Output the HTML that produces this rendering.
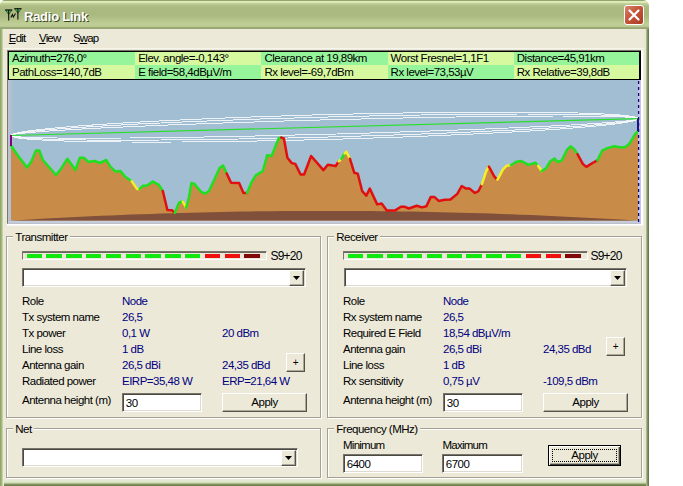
<!DOCTYPE html>
<html><head><meta charset="utf-8"><title>Radio Link</title>
<style>
html,body{margin:0;padding:0;background:#fff;overflow:hidden}
body{width:683px;height:486px;position:relative;font-family:"Liberation Sans",sans-serif;font-size:11.5px;letter-spacing:-0.5px;color:#000}
#win{position:absolute;left:0;top:0;width:649px;height:486px;background:#ece9d8;border-radius:5px 6px 0 0;overflow:hidden}
#tb{position:absolute;left:0;top:0;width:649px;height:29px;background:linear-gradient(#8f9f6c 0,#96a673 0.7px,#e0efb8 1.1px,#dcebb2 2.4px,#c0cf98 3.6px,#aebd85 6px,#a9b97f 9px,#a9b97f 15px,#b4c48b 20px,#bfce96 24px,#bdcc94 26.3px,#a4b47c 27.3px,#8d9d69 27.9px,#8d9d69 28.4px,#d0d4ba 29px)}
#bl,#br,#bb{position:absolute}
#bl{left:0;top:29px;width:4px;height:457px;background:linear-gradient(90deg,#86a05a 0,#9cb274 1px,#acbe8a 2px,#c8d2aa 2.6px,#e8ead6 3.2px,#eeeddc 4px)}
#br{left:643px;top:29px;width:4px;height:452px;background:linear-gradient(90deg,#ece9d8 0,#e6e9d4 1px,#e2e6ce 3px,#c4cfa8 4px)}
#brd{position:absolute;left:646px;top:29px;width:3px;height:457px;background:linear-gradient(90deg,#c4cfa8 0,#a0b080 0.7px,#7e8e62 1.6px,#5e6e46 3px)}
#bb{left:0;top:479px;width:649px;height:7px;background:linear-gradient(#ece9d8 0,#e8ecd6 1px,#dce5c6 3.3px,#bccaa0 4.3px,#82945f 5.1px,#6a7d4c 7px)}
#ttl{position:absolute;left:24px;top:8px;font-weight:bold;font-size:13px;letter-spacing:-0.25px;color:#fff;text-shadow:1px 1px 0 #3c4a22;line-height:18px}
#cls{position:absolute;left:623.5px;top:5px;width:18px;height:18px;border:1px solid #fff;border-radius:3px;background:linear-gradient(135deg,#d8846a,#c4553a 45%,#a83c22)}
.mn{position:absolute;top:32px;line-height:13px;letter-spacing:-0.85px}
.mn u{text-decoration:underline}
#info{position:absolute;left:8px;top:51px;width:631px;height:26.5px;border:1px solid #000;background:#000;overflow:hidden}
.c{position:absolute;height:13px;line-height:13px;padding-left:3px;box-sizing:border-box;white-space:nowrap;overflow:hidden}
#plot{position:absolute;left:0;top:0}
.gb{position:absolute;border:1px solid #a5a094;box-shadow:1px 1px 0 #fff, inset 1px 1px 0 #fff;box-sizing:border-box}
.gl{position:absolute;background:#ece9d8;padding:0 2px;line-height:13px;white-space:nowrap}
.t{position:absolute;line-height:13px;white-space:nowrap}
.v{color:#000080}
.sm{position:absolute;top:251px;width:245px;height:9px;border-top:1px solid #77756a;border-left:1px solid #77756a;box-shadow:inset 0 1px 0 #6a685e;border-bottom:1px solid #fff;border-right:1px solid #fff;box-sizing:border-box;background:#ece9d8}
.sm i{position:absolute;top:2px;height:4px;width:15.5px}
.in{position:absolute;background:#fff;border:1px solid;border-color:#77756a #fff #fff #77756a;box-shadow:inset 1px 1px 0 #4a4840, inset -1px -1px 0 #dedad0;box-sizing:border-box;line-height:14px;padding:1.5px 0 0 2.8px;font-size:11.5px}
.btn{position:absolute;background:#ece9d8;border:1px solid;border-color:#fff #55534a #55534a #fff;box-shadow:inset -1px -1px 0 #aca899;box-sizing:border-box;text-align:center;white-space:nowrap}
.dd{position:absolute;width:15px;height:16px;background:#ece9d8;border:1px solid;border-color:#fff #55534a #55534a #fff;box-shadow:inset -1px -1px 0 #aca899;box-sizing:border-box}
.dd:after{content:"";position:absolute;left:3px;top:5px;width:7px;height:4px;background:#000;clip-path:polygon(0 0,100% 0,50% 100%)}
</style></head><body>
<div id="win">
<div id="tb"></div>
<svg id="ico" width="26" height="26" viewBox="0 0 26 26" style="position:absolute;left:0;top:0"><path d="M5.4 10h6.6L8.7 14.4zM14.6 8.7h6.6L17.9 13.1z" fill="#52cc62" stroke="#0c100c" stroke-width="0.6" stroke-linejoin="round"/><path d="M5.2 10h7M14.4 8.7h7" stroke="#0c100c" stroke-width="0.9"/><path d="M8.7 10V20.6M17.9 8.7V19.4" stroke="#0c100c" stroke-width="1.1" fill="none"/><path d="M10.9 17.4l1.5-2.8 0.9 2.4 2.2-3.6" stroke="#0c100c" stroke-width="1.05" fill="none"/></svg>
<div id="ttl">Radio Link</div>
<div id="cls"><svg width="18" height="18" viewBox="0 0 18 18"><path d="M4.5 4.5l9 9M13.5 4.5l-9 9" stroke="#fff" stroke-width="2.2" stroke-linecap="round"/></svg></div>
<div id="br"></div><div id="bb"></div><div id="bl"></div><div id="brd"></div>
<span class="mn" style="left:8.8px"><u>E</u>dit</span><span class="mn" style="left:39px"><u>V</u>iew</span><span class="mn" style="left:73px">S<u>w</u>ap</span>

<div style="position:absolute;left:4px;top:48px;width:640px;height:1px;background:#f7f6ee"></div><div id="info" style="z-index:2"><div class="c" style="left:0.0px;top:0;width:126.7px;background:#96f49a">Azimuth=276,0°</div><div class="c" style="left:0.0px;top:13px;height:13.5px;line-height:14px;width:126.7px;background:#d6f9a0">PathLoss=140,7dB</div><div class="c" style="left:126.2px;top:0;width:126.7px;background:#d6f9a0">Elev. angle=-0,143°</div><div class="c" style="left:126.2px;top:13px;height:13.5px;line-height:14px;width:126.7px;background:#96f49a">E field=58,4dBµV/m</div><div class="c" style="left:252.4px;top:0;width:126.7px;background:#96f49a">Clearance at 19,89km</div><div class="c" style="left:252.4px;top:13px;height:13.5px;line-height:14px;width:126.7px;background:#d6f9a0">Rx level=-69,7dBm</div><div class="c" style="left:378.6px;top:0;width:126.7px;background:#d6f9a0">Worst Fresnel=1,1F1</div><div class="c" style="left:378.6px;top:13px;height:13.5px;line-height:14px;width:126.7px;background:#96f49a">Rx level=73,53µV</div><div class="c" style="left:504.8px;top:0;width:125.5px;background:#96f49a">Distance=45,91km</div><div class="c" style="left:504.8px;top:13px;height:13.5px;line-height:14px;width:125.5px;background:#d6f9a0">Rx Relative=39,8dB</div></div>

<svg id="plot" width="649" height="230" viewBox="0 0 649 230"><defs><clipPath id="cp"><rect x="8" y="79" width="633" height="144.8"/></clipPath><linearGradient id="lg" x1="0" x2="1" y1="0" y2="0"><stop offset="0" stop-color="#bcc4d4"/><stop offset="1" stop-color="#a2bed2"/></linearGradient></defs><rect x="7" y="50" width="636.3" height="175.6" fill="#fff"/><rect x="7" y="50" width="634" height="173.8" fill="#7a786a"/><rect x="8" y="51" width="633" height="172.8" fill="#c6ccda"/><g clip-path="url(#cp)"><rect x="8" y="79" width="633" height="142" fill="#a2bed2"/><rect x="8" y="79" width="6" height="142" fill="url(#lg)"/>
<polygon points="11,135.5 11.2,135.2 12,134.9 13.2,134.6 14.9,134.3 17,133.9 19.7,133.6 22.8,133.2 26.3,132.9 30.4,132.5 34.9,132.1 39.8,131.7 45.2,131.3 51,130.9 57.2,130.5 63.8,130.1 70.9,129.7 78.3,129.2 86.1,128.8 94.3,128.4 102.8,127.9 111.7,127.5 120.9,127.1 130.4,126.6 140.2,126.2 150.3,125.8 160.7,125.3 171.3,124.9 182.2,124.5 193.3,124.1 204.5,123.7 216,123.3 227.6,122.8 239.4,122.5 251.3,122.1 263.3,121.7 275.5,121.3 287.7,120.9 299.9,120.6 312.2,120.2 324.5,119.9 336.8,119.6 349.1,119.3 361.3,119 373.5,118.7 385.7,118.4 397.7,118.1 409.6,117.9 421.4,117.7 433,117.4 444.5,117.2 455.7,117 466.8,116.9 477.7,116.7 488.3,116.6 498.7,116.4 508.8,116.3 518.6,116.2 528.1,116.2 537.3,116.1 546.2,116.1 554.7,116 562.9,116 570.7,116 578.1,116.1 585.2,116.1 591.8,116.2 598,116.3 603.8,116.3 609.2,116.5 614.1,116.6 618.6,116.7 622.7,116.9 626.2,117.1 629.3,117.3 632,117.5 634.1,117.7 635.8,117.9 637,118.2 637.8,118.4 638,118.7 638,118.7 637.8,119 637,119.3 635.8,119.6 634.1,119.9 632,120.3 629.3,120.6 626.2,121 622.7,121.3 618.6,121.7 614.1,122.1 609.2,122.5 603.8,122.9 598,123.3 591.8,123.7 585.2,124.1 578.1,124.5 570.7,125 562.9,125.4 554.7,125.8 546.2,126.3 537.3,126.7 528.1,127.1 518.6,127.6 508.8,128 498.7,128.4 488.3,128.9 477.7,129.3 466.8,129.7 455.7,130.1 444.5,130.5 433,130.9 421.4,131.4 409.6,131.7 397.7,132.1 385.7,132.5 373.5,132.9 361.3,133.3 349.1,133.6 336.8,134 324.5,134.3 312.2,134.6 299.9,134.9 287.7,135.2 275.5,135.5 263.3,135.8 251.3,136.1 239.4,136.3 227.6,136.5 216,136.8 204.5,137 193.3,137.2 182.2,137.3 171.3,137.5 160.7,137.6 150.3,137.8 140.2,137.9 130.4,138 120.9,138 111.7,138.1 102.8,138.1 94.3,138.2 86.1,138.2 78.3,138.2 70.9,138.1 63.8,138.1 57.2,138 51,137.9 45.2,137.9 39.8,137.7 34.9,137.6 30.4,137.5 26.3,137.3 22.8,137.1 19.7,136.9 17,136.7 14.9,136.5 13.2,136.3 12,136 11.2,135.8 11,135.5" fill="none" stroke="#ffffff" stroke-width="1" stroke-opacity="0.8" shape-rendering="crispEdges"/>
<polygon points="11,135.5 11.2,135.1 12,134.7 13.2,134.3 14.9,133.8 17,133.4 19.7,132.9 22.8,132.5 26.3,132 30.4,131.5 34.9,131 39.8,130.5 45.2,130 51,129.5 57.2,129 63.8,128.5 70.9,128 78.3,127.5 86.1,127 94.3,126.5 102.8,126 111.7,125.5 120.9,125 130.4,124.4 140.2,123.9 150.3,123.5 160.7,123 171.3,122.5 182.2,122 193.3,121.5 204.5,121.1 216,120.6 227.6,120.2 239.4,119.8 251.3,119.3 263.3,118.9 275.5,118.5 287.7,118.2 299.9,117.8 312.2,117.4 324.5,117.1 336.8,116.8 349.1,116.5 361.3,116.2 373.5,115.9 385.7,115.7 397.7,115.4 409.6,115.2 421.4,115 433,114.8 444.5,114.6 455.7,114.5 466.8,114.4 477.7,114.3 488.3,114.2 498.7,114.1 508.8,114.1 518.6,114 528.1,114 537.3,114.1 546.2,114.1 554.7,114.1 562.9,114.2 570.7,114.3 578.1,114.4 585.2,114.6 591.8,114.7 598,114.9 603.8,115.1 609.2,115.3 614.1,115.5 618.6,115.8 622.7,116 626.2,116.3 629.3,116.6 632,116.9 634.1,117.2 635.8,117.6 637,117.9 637.8,118.3 638,118.7 638,118.7 637.8,119.1 637,119.5 635.8,119.9 634.1,120.4 632,120.8 629.3,121.3 626.2,121.7 622.7,122.2 618.6,122.7 614.1,123.2 609.2,123.7 603.8,124.2 598,124.7 591.8,125.2 585.2,125.7 578.1,126.2 570.7,126.7 562.9,127.2 554.7,127.7 546.2,128.2 537.3,128.7 528.1,129.2 518.6,129.8 508.8,130.3 498.7,130.7 488.3,131.2 477.7,131.7 466.8,132.2 455.7,132.7 444.5,133.1 433,133.6 421.4,134 409.6,134.4 397.7,134.9 385.7,135.3 373.5,135.7 361.3,136 349.1,136.4 336.8,136.8 324.5,137.1 312.2,137.4 299.9,137.7 287.7,138 275.5,138.3 263.3,138.5 251.3,138.8 239.4,139 227.6,139.2 216,139.4 204.5,139.6 193.3,139.7 182.2,139.8 171.3,139.9 160.7,140 150.3,140.1 140.2,140.1 130.4,140.2 120.9,140.2 111.7,140.1 102.8,140.1 94.3,140.1 86.1,140 78.3,139.9 70.9,139.8 63.8,139.6 57.2,139.5 51,139.3 45.2,139.1 39.8,138.9 34.9,138.7 30.4,138.4 26.3,138.2 22.8,137.9 19.7,137.6 17,137.3 14.9,137 13.2,136.6 12,136.3 11.2,135.9 11,135.5" fill="none" stroke="#ffffff" stroke-width="1" stroke-opacity="0.8" shape-rendering="crispEdges"/>
<polygon points="11,135.5 11.2,135 12,134.5 13.2,134 14.9,133.5 17,132.9 19.7,132.4 22.8,131.8 26.3,131.3 30.4,130.7 34.9,130.1 39.8,129.5 45.2,129 51,128.4 57.2,127.8 63.8,127.2 70.9,126.6 78.3,126 86.1,125.4 94.3,124.9 102.8,124.3 111.7,123.7 120.9,123.1 130.4,122.6 140.2,122 150.3,121.5 160.7,120.9 171.3,120.4 182.2,119.9 193.3,119.4 204.5,118.9 216,118.4 227.6,117.9 239.4,117.4 251.3,117 263.3,116.6 275.5,116.2 287.7,115.8 299.9,115.4 312.2,115 324.5,114.7 336.8,114.4 349.1,114.1 361.3,113.8 373.5,113.5 385.7,113.3 397.7,113.1 409.6,112.9 421.4,112.7 433,112.6 444.5,112.4 455.7,112.3 466.8,112.2 477.7,112.2 488.3,112.1 498.7,112.1 508.8,112.1 518.6,112.2 528.1,112.2 537.3,112.3 546.2,112.4 554.7,112.5 562.9,112.7 570.7,112.8 578.1,113 585.2,113.2 591.8,113.5 598,113.7 603.8,114 609.2,114.3 614.1,114.6 618.6,114.9 622.7,115.3 626.2,115.6 629.3,116 632,116.4 634.1,116.9 635.8,117.3 637,117.8 637.8,118.2 638,118.7 638,118.7 637.8,119.2 637,119.7 635.8,120.2 634.1,120.7 632,121.3 629.3,121.8 626.2,122.4 622.7,122.9 618.6,123.5 614.1,124.1 609.2,124.7 603.8,125.2 598,125.8 591.8,126.4 585.2,127 578.1,127.6 570.7,128.2 562.9,128.8 554.7,129.3 546.2,129.9 537.3,130.5 528.1,131.1 518.6,131.6 508.8,132.2 498.7,132.7 488.3,133.3 477.7,133.8 466.8,134.3 455.7,134.8 444.5,135.3 433,135.8 421.4,136.3 409.6,136.8 397.7,137.2 385.7,137.6 373.5,138 361.3,138.4 349.1,138.8 336.8,139.2 324.5,139.5 312.2,139.8 299.9,140.1 287.7,140.4 275.5,140.7 263.3,140.9 251.3,141.1 239.4,141.3 227.6,141.5 216,141.6 204.5,141.8 193.3,141.9 182.2,142 171.3,142 160.7,142.1 150.3,142.1 140.2,142.1 130.4,142 120.9,142 111.7,141.9 102.8,141.8 94.3,141.7 86.1,141.5 78.3,141.4 70.9,141.2 63.8,141 57.2,140.7 51,140.5 45.2,140.2 39.8,139.9 34.9,139.6 30.4,139.3 26.3,138.9 22.8,138.6 19.7,138.2 17,137.8 14.9,137.3 13.2,136.9 12,136.4 11.2,136 11,135.5" fill="none" stroke="#ffffff" stroke-width="1" stroke-opacity="0.8" shape-rendering="crispEdges"/>
<line x1="11" y1="135.5" x2="638" y2="118.7" stroke="#28e028" stroke-width="1.2"/>
<polygon points="11,145.5 18.2,156 27,167.5 31.4,161.4 35.8,150.6 39.4,150.6 42.9,160 49,167 56,175 61.4,168.2 67.4,158.7 75.4,170 79.7,157.8 84,157.8 88.4,162 94.6,161 99.9,163 106.2,160 110.4,166.6 115.5,171.6 120.2,170.9 125.5,177 131.7,181.3 137,188.9 139.6,188.9 143.1,185.7 146.6,185.7 152.8,181.6 158.9,184.8 162.8,191 167.4,210 172.1,210.3 174.8,212.9 179.1,202.4 182.7,201.5 186.2,207.7 188.8,198 191.4,183 194.1,183.6 201.1,191.8 205.5,193.6 209,191 215.2,177.8 219.6,168.1 223.1,165.5 226.7,173.5 231.1,182.8 239.1,182.9 243.5,192.9 247,192.9 251.4,182.4 255.8,175.4 262.8,171 267.2,155.1 271.6,156 278.6,138.5 281.2,137.6 283.9,138.5 287.4,157.8 291.8,163.1 295.3,163.9 300.6,174.5 304.1,174.5 311.1,156 323.4,170.1 327.8,164.8 335.7,166 338.7,161.4 341.4,158.9 344.7,153.5 346.4,151.7 349.9,158.7 354.3,172.8 357.8,173.7 362.2,191.2 366.3,195.6 369.8,188.6 377.2,204.4 381.6,203.5 386.8,210.6 394.8,210.6 400.9,206.7 404.4,206.7 408.8,208.5 416.7,205.7 422,207.4 426.4,206.2 430.8,196.9 434.3,196.9 438.7,200.9 444.8,199.7 450.5,199.5 457.3,193.9 461.7,186 466.1,188.6 469.6,188.6 474.9,193 478.4,191.2 481.9,184.2 486.3,171 488.9,166.6 494.2,176.3 497.4,179.8 503,169.3 506.5,165.8 510.9,165.2 516.2,161.7 521.4,161 528.5,164.9 535.5,162.8 538.1,165.8 541.7,171 546,168.4 550.3,161.2 554.5,158.6 557.6,162.1 561.8,160.4 567,149.8 570.5,146.3 574,148.9 577.5,154.2 582.8,163.9 586.3,166.9 592.5,163 597.4,160.4 602.1,150.7 607.4,148.1 614.4,146.3 619.7,147.2 625,147.2 629.4,143.7 634.7,134.9 638,131 638,220.6 11,220.6" fill="#c88c48"/>
<polygon points="11,220.6 21,220 31,219.4 41,218.8 51,218.3 61,217.8 71,217.2 81,216.8 91,216.3 101,215.8 111,215.4 121,215 131,214.6 141,214.2 151,213.9 161,213.5 171,213.2 181,212.9 191,212.7 201,212.4 211,212.2 221,212 231,211.8 241,211.6 251,211.4 261,211.3 271,211.2 281,211.1 291,211 301,211 311,210.9 321,210.9 331,210.9 341,210.9 351,211 361,211 371,211.1 381,211.2 391,211.3 401,211.5 411,211.6 421,211.8 431,212 441,212.2 451,212.5 461,212.7 471,213 481,213.3 491,213.6 501,214 511,214.3 521,214.7 531,215.1 541,215.5 551,216 561,216.4 571,216.9 581,217.4 591,217.9 601,218.4 611,219 621,219.6 631,220.2 638,220.6 638,220.6 11,220.6" fill="#80503a"/>
<polyline points="11,145.5 18.2,156 27,167.5 31.4,161.4 35.8,150.6 39.4,150.6 42.9,160 49,167 56,175 61.4,168.2 67.4,158.7 75.4,170 79.7,157.8 84,157.8 88.4,162 94.6,161 99.9,163 106.2,160 110.4,166.6 115.5,171.6 120.2,170.9 125.5,177 131.7,181.3" fill="none" stroke="#1fe01f" stroke-width="2.5" stroke-linejoin="round" stroke-linecap="round"/>
<polyline points="131.7,181.3 137,188.9 139.6,188.9" fill="none" stroke="#f4ee28" stroke-width="2.5" stroke-linejoin="round" stroke-linecap="round"/>
<polyline points="139.6,188.9 143.1,185.7 146.6,185.7 152.8,181.6 158.9,184.8 162.8,191" fill="none" stroke="#1fe01f" stroke-width="2.5" stroke-linejoin="round" stroke-linecap="round"/>
<polyline points="162.8,191 167.4,210 172.1,210.3 174.8,212.9" fill="none" stroke="#e01010" stroke-width="2.5" stroke-linejoin="round" stroke-linecap="round"/>
<polyline points="174.8,212.9 179.1,202.4 182.7,201.5" fill="none" stroke="#1fe01f" stroke-width="2.5" stroke-linejoin="round" stroke-linecap="round"/>
<polyline points="182.7,201.5 186.2,207.7" fill="none" stroke="#f4ee28" stroke-width="2.5" stroke-linejoin="round" stroke-linecap="round"/>
<polyline points="186.2,207.7 188.8,198 191.4,183 194.1,183.6 201.1,191.8 205.5,193.6 209,191 215.2,177.8 219.6,168.1 223.1,165.5 226.7,173.5" fill="none" stroke="#1fe01f" stroke-width="2.5" stroke-linejoin="round" stroke-linecap="round"/>
<polyline points="226.7,173.5 231.1,182.8 239.1,182.9 243.5,192.9 247,192.9" fill="none" stroke="#e01010" stroke-width="2.5" stroke-linejoin="round" stroke-linecap="round"/>
<polyline points="247,192.9 251.4,182.4 255.8,175.4 262.8,171 267.2,155.1 271.6,156 278.6,138.5 281.2,137.6" fill="none" stroke="#1fe01f" stroke-width="2.5" stroke-linejoin="round" stroke-linecap="round"/>
<polyline points="281.2,137.6 283.9,138.5 287.4,157.8 291.8,163.1 295.3,163.9 300.6,174.5 304.1,174.5 311.1,156 323.4,170.1 327.8,164.8 335.7,166 338.7,161.4" fill="none" stroke="#e01010" stroke-width="2.5" stroke-linejoin="round" stroke-linecap="round"/>
<polyline points="338.7,161.4 341.4,158.9" fill="none" stroke="#f4ee28" stroke-width="2.5" stroke-linejoin="round" stroke-linecap="round"/>
<polyline points="341.4,158.9 344.7,153.5" fill="none" stroke="#1fe01f" stroke-width="2.5" stroke-linejoin="round" stroke-linecap="round"/>
<polyline points="344.7,153.5 346.4,151.7 349.9,158.7" fill="none" stroke="#f4ee28" stroke-width="2.5" stroke-linejoin="round" stroke-linecap="round"/>
<polyline points="349.9,158.7 354.3,172.8 357.8,173.7 362.2,191.2 366.3,195.6 369.8,188.6 377.2,204.4 381.6,203.5 386.8,210.6 394.8,210.6 400.9,206.7 404.4,206.7 408.8,208.5 416.7,205.7 422,207.4 426.4,206.2 430.8,196.9 434.3,196.9 438.7,200.9 444.8,199.7 450.5,199.5 457.3,193.9 461.7,186 466.1,188.6 469.6,188.6 474.9,193 478.4,191.2 481.9,184.2" fill="none" stroke="#e01010" stroke-width="2.5" stroke-linejoin="round" stroke-linecap="round"/>
<polyline points="481.9,184.2 486.3,171 488.9,166.6" fill="none" stroke="#f4ee28" stroke-width="2.5" stroke-linejoin="round" stroke-linecap="round"/>
<polyline points="488.9,166.6 494.2,176.3 497.4,179.8" fill="none" stroke="#e01010" stroke-width="2.5" stroke-linejoin="round" stroke-linecap="round"/>
<polyline points="497.4,179.8 503,169.3 506.5,165.8 510.9,165.2" fill="none" stroke="#f4ee28" stroke-width="2.5" stroke-linejoin="round" stroke-linecap="round"/>
<polyline points="510.9,165.2 516.2,161.7 521.4,161 528.5,164.9 535.5,162.8 538.1,165.8" fill="none" stroke="#1fe01f" stroke-width="2.5" stroke-linejoin="round" stroke-linecap="round"/>
<polyline points="538.1,165.8 541.7,171" fill="none" stroke="#f4ee28" stroke-width="2.5" stroke-linejoin="round" stroke-linecap="round"/>
<polyline points="541.7,171 546,168.4 550.3,161.2 554.5,158.6 557.6,162.1 561.8,160.4 567,149.8 570.5,146.3 574,148.9 577.5,154.2" fill="none" stroke="#1fe01f" stroke-width="2.5" stroke-linejoin="round" stroke-linecap="round"/>
<polyline points="577.5,154.2 582.8,163.9 586.3,166.9 592.5,163 597.4,160.4" fill="none" stroke="#e01010" stroke-width="2.5" stroke-linejoin="round" stroke-linecap="round"/>
<polyline points="597.4,160.4 602.1,150.7 607.4,148.1 614.4,146.3 619.7,147.2 625,147.2 629.4,143.7 634.7,134.9 638,131" fill="none" stroke="#1fe01f" stroke-width="2.5" stroke-linejoin="round" stroke-linecap="round"/>
<line x1="11" y1="135" x2="11" y2="146" stroke="#800080" stroke-width="2"/>
<rect x="638" y="79" width="3" height="145" fill="#c4c4f0"/>
<line x1="638.6" y1="81" x2="638.6" y2="223" stroke="#14086c" stroke-width="1.3" stroke-dasharray="3,3"/>
<line x1="638" y1="118.5" x2="638" y2="131" stroke="#20108a" stroke-width="2"/>
</g></svg>

<div class="gb" style="left:6px;top:236px;width:315px;height:182px"></div><span class="gl" style="left:13.3px;top:231px">Transmitter</span>
<div class="gb" style="left:327px;top:236px;width:315px;height:182px"></div><span class="gl" style="left:334.3px;top:231px">Receiver</span>
<div class="gb" style="left:6px;top:428px;width:315px;height:50px"></div><span class="gl" style="left:13.3px;top:423px">Net</span>
<div class="gb" style="left:327px;top:428px;width:315px;height:50px"></div><span class="gl" style="left:334.3px;top:423px">Frequency (MHz)</span>
<div class="sm" style="left:22px"><i style="left:3.5px;background:#10e810"></i><i style="left:23.3px;background:#10e810"></i><i style="left:43.1px;background:#10e810"></i><i style="left:62.9px;background:#10e810"></i><i style="left:82.7px;background:#10e810"></i><i style="left:102.5px;background:#10e810"></i><i style="left:122.3px;background:#10e810"></i><i style="left:142.1px;background:#10e810"></i><i style="left:161.9px;background:#10e810"></i><i style="left:181.7px;background:#f01010"></i><i style="left:201.5px;background:#f01010"></i><i style="left:221.3px;background:#800808"></i></div><div class="sm" style="left:343px"><i style="left:3.5px;background:#10e810"></i><i style="left:23.3px;background:#10e810"></i><i style="left:43.1px;background:#10e810"></i><i style="left:62.9px;background:#10e810"></i><i style="left:82.7px;background:#10e810"></i><i style="left:102.5px;background:#10e810"></i><i style="left:122.3px;background:#10e810"></i><i style="left:142.1px;background:#10e810"></i><i style="left:161.9px;background:#10e810"></i><i style="left:181.7px;background:#f01010"></i><i style="left:201.5px;background:#f01010"></i><i style="left:221.3px;background:#800808"></i></div>
<span class="t" style="left:270.5px;top:249.6px;font-size:12px;letter-spacing:-0.8px">S9+20</span><span class="t" style="left:590.5px;top:249.6px;font-size:12px;letter-spacing:-0.8px">S9+20</span>
<div class="in" style="left:22px;top:268px;width:284px;height:19px"></div><div class="dd" style="left:289px;top:270px"></div>
<div class="in" style="left:344px;top:268px;width:283px;height:19px"></div><div class="dd" style="left:610px;top:270px"></div>
<span class="t" style="left:22px;top:295px">Role</span><span class="t v" style="left:122px;top:295px">Node</span><span class="t" style="left:22px;top:311px">Tx system name</span><span class="t v" style="left:122px;top:311px">26,5</span><span class="t" style="left:22px;top:327px">Tx power</span><span class="t v" style="left:122px;top:327px">0,1 W</span><span class="t v" style="left:222px;top:327px">20 dBm</span><span class="t" style="left:22px;top:343px">Line loss</span><span class="t v" style="left:122px;top:343px">1 dB</span><span class="t" style="left:22px;top:359px">Antenna gain</span><span class="t v" style="left:122px;top:359px">26,5 dBi</span><span class="t v" style="left:222px;top:359px">24,35 dBd</span><span class="t" style="left:22px;top:375px">Radiated power</span><span class="t v" style="left:122px;top:375px">EIRP=35,48 W</span><span class="t v" style="left:222px;top:375px">ERP=21,64 W</span><span class="t" style="left:343px;top:295px">Role</span><span class="t v" style="left:443px;top:295px">Node</span><span class="t" style="left:343px;top:311px">Rx system name</span><span class="t v" style="left:443px;top:311px">26,5</span><span class="t" style="left:343px;top:327px">Required E Field</span><span class="t v" style="left:443px;top:327px">18,54 dBµV/m</span><span class="t" style="left:343px;top:343px">Antenna gain</span><span class="t v" style="left:443px;top:343px">26,5 dBi</span><span class="t v" style="left:543px;top:343px">24,35 dBd</span><span class="t" style="left:343px;top:359px">Line loss</span><span class="t v" style="left:443px;top:359px">1 dB</span><span class="t" style="left:343px;top:375px">Rx sensitivity</span><span class="t v" style="left:443px;top:375px">0,75 µV</span><span class="t v" style="left:543px;top:375px">-109,5 dBm</span>
<span class="t" style="left:22px;top:394px">Antenna height (m)</span><span class="t" style="left:343px;top:394px">Antenna height (m)</span>
<div class="in" style="left:122px;top:393px;width:80px;height:19px">30</div>
<div class="in" style="left:443px;top:393px;width:80px;height:19px">30</div>
<div class="btn" style="left:222px;top:393px;width:85px;height:19px;line-height:17px;font-size:11.5px">Apply</div>
<div class="btn" style="left:543px;top:393px;width:85px;height:19px;line-height:17px;font-size:11.5px">Apply</div>
<div class="btn" style="left:286px;top:353px;width:19px;height:19px;line-height:17px;font-size:10px">+</div>
<div class="btn" style="left:606px;top:337px;width:19px;height:19px;line-height:17px;font-size:10px">+</div>
<div class="in" style="left:22px;top:448px;width:276px;height:19px"></div><div class="dd" style="left:281px;top:450px"></div>
<span class="t" style="left:343px;top:439px;letter-spacing:-0.75px">Minimum</span><span class="t" style="left:442.5px;top:439px;letter-spacing:-0.75px">Maximum</span>
<div class="in" style="left:343px;top:454px;width:80px;height:19px">6400</div>
<div class="in" style="left:442px;top:454px;width:81px;height:19px">6700</div>
<div class="btn" style="left:548px;top:445px;width:73px;height:21px;line-height:18px;font-size:11.5px;border-color:#000;box-shadow:inset 1px 1px 0 #fff,inset -1px -1px 0 #404040,inset -2px -2px 0 #aca899"><span style="position:absolute;left:3px;top:3px;right:3px;bottom:3px;border:1px dotted #000"></span>Apply</div>
</div>
</body></html>
